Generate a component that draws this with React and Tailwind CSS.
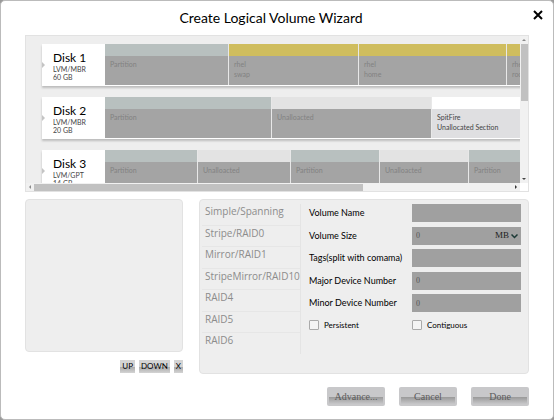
const disks = [
  {
    name: 'Disk 1', type: 'LVM/MBR', size: '60 GB',
    segments: [
      { kind: 'part', lines: ['Partition'], width: 'w-[123px]' },
      { kind: 'gold', lines: ['rhel', 'swap'], width: 'w-[129px]' },
      { kind: 'gold', lines: ['rhel', 'home'], width: 'w-[147px]' },
      { kind: 'gold', lines: ['rhel', 'root'], width: 'w-40' },
    ],
  },
  {
    name: 'Disk 2', type: 'LVM/MBR', size: '20 GB',
    segments: [
      { kind: 'part', lines: ['Partition'], width: 'w-[166px]' },
      { kind: 'free', lines: ['Unalloacted'], width: 'w-[159px]' },
      { kind: 'selected', lines: ['SpitFire', 'Unallocated Section'], width: 'w-40' },
    ],
  },
  {
    name: 'Disk 3', type: 'LVM/GPT', size: '14 GB',
    segments: [
      { kind: 'part', lines: ['Partition'], width: 'w-[92px]' },
      { kind: 'free', lines: ['Unalloacted'], width: 'w-[92px]' },
      { kind: 'part', lines: ['Partition'], width: 'w-[88px]' },
      { kind: 'free', lines: ['Unalloacted'], width: 'w-[88px]' },
      { kind: 'part', lines: ['Partition'], width: 'w-40' },
    ],
  },
];

const heads = { part: 'bg-[#b8c0bf]', gold: 'bg-[#cfbd5e]', free: 'bg-[#e3e3e3]', selected: 'bg-white' };

const volumeTypes = ['Simple/Spanning', 'Stripe/RAID0', 'Mirror/RAID1', 'StripeMirror/RAID10', 'RAID4', 'RAID5', 'RAID6'];

function Segment({ kind, lines, width }) {
  const body = kind === 'selected' ? 'bg-[#dfdfe1] text-[#444]' : 'bg-[#a4a4a4] text-[#828282]';
  return (
    <div className={`flex shrink-0 flex-col ${width}`}>
      <div className={`h-3 ${heads[kind]}`} />
      <div className={`flex-1 px-[5px] pt-[3px] text-[7px] leading-[10px] whitespace-nowrap ${body}`}>
        {lines.map((l) => <div key={l}>{l}</div>)}
      </div>
    </div>
  );
}

function Disk({ disk }) {
  return (
    <div className="flex h-[42px] w-max shrink-0 bg-white pb-px shadow-[0_2px_2px_#bdbdbd]">
      <div className="flex w-[63px] shrink-0 items-center">
        <svg className="h-2 w-1" viewBox="0 0 4 8"><path d="M0 1l3 3-3 3z" fill="#c4c4c4" /></svg>
        <div className="pt-[3px] pl-[7px] text-[7px] leading-2 text-[#444]">
          <div className="text-[12px] leading-[14px] text-black">{disk.name}</div>
          <div>{disk.type}</div>
          <div>{disk.size}</div>
        </div>
      </div>
      <div className="flex gap-px bg-[#e8e8e8]">
        {disk.segments.map((s, i) => <Segment key={i} {...s} />)}
      </div>
    </div>
  );
}

function Arrow({ d, fill }) {
  return <svg className="size-2 shrink-0" viewBox="0 0 8 8"><path d={d} fill={fill} /></svg>;
}

function DiskList() {
  return (
    <section className="grid h-[157px] grid-cols-[minmax(0,1fr)_8px] grid-rows-[minmax(0,1fr)_8px] border border-[#e2e2e2] bg-[#eee]">
      <div className="flex flex-col gap-[11px] overflow-hidden pt-2 pl-4">
        {disks.map((d) => <Disk key={d.name} disk={d} />)}
      </div>
      <div className="flex flex-col items-center bg-[#f1f1f1]">
        <Arrow d="M2 5l2-2 2 2z" fill="#8a8a8a" />
        <div className="h-[57px] w-[7px] bg-[#c1c1c1]" />
        <div className="mt-auto"><Arrow d="M2 3l2 2 2-2z" fill="#444" /></div>
      </div>
      <div className="flex items-center bg-[#f1f1f1]">
        <Arrow d="M5 2l-2 2 2 2z" fill="#8a8a8a" />
        <div className="h-[7px] w-2/3 bg-[#c1c1c1]" />
        <div className="ml-auto"><Arrow d="M3 2l2 2-2 2z" fill="#333" /></div>
      </div>
      <div className="bg-white" />
    </section>
  );
}

const box = 'block h-[18px] w-full min-w-0 rounded-none bg-[#a0a0a0] px-1 font-["Liberation_Serif",serif] text-[8px] text-[#222] placeholder:text-[#555] outline-none';

function Field({ id, label, children }) {
  return (
    <div className="flex items-center">
      <label htmlFor={id} className="w-[103px] shrink-0 text-[9px] leading-[18px] whitespace-nowrap">{label}</label>
      <div className="min-w-0 flex-1">{children}</div>
    </div>
  );
}

function Check({ id, label }) {
  return (
    <div className="flex items-center gap-[5px]">
      <input id={id} type="checkbox" className="size-[10px] appearance-none rounded-[1px] border border-[#aaa] bg-[#f4f4f4] checked:bg-[#888]" />
      <label htmlFor={id} className="text-[8px] leading-[10px]">{label}</label>
    </div>
  );
}

function SmallButton({ children }) {
  return (
    <button type="button" className="h-[13px] bg-linear-to-b from-[#d4d4d4] from-50% via-[#ababab] via-55% to-[#d4d4d4] px-[2px] text-[8px] leading-[13px]">
      {children}
    </button>
  );
}

function WizardButton({ children }) {
  return (
    <button type="button" className="relative h-[19px] w-[58px] rounded-[2px] bg-[#c8c8ca] font-['Liberation_Serif',serif] text-[10px] leading-[19px] text-[#5c5c5c]">
      <span className="absolute inset-x-[2px] top-[10px] bottom-0 bg-linear-to-b from-[#999] to-[#c8c8ca] to-80%" />
      <span className="relative">{children}</span>
    </button>
  );
}

export default function App() {
  return (
    <div className="bg-[#999] font-[Lato,sans-serif] text-black">
      <main className="flex min-h-screen flex-col rounded-[5px] border border-[#bbb] bg-white px-6 pb-[13px]">
        <header className="relative flex h-[34px] items-center justify-center pr-3">
          <h1 className="text-[14px] leading-5">Create Logical Volume Wizard</h1>
          <button type="button" aria-label="Close" className="absolute top-[9px] -right-[14px]">
            <svg className="size-[10px]" viewBox="0 0 10 10"><path d="M1 1l8 8M9 1L1 9" stroke="#000" strokeWidth="2" /></svg>
          </button>
        </header>
        <DiskList />
        <div className="mt-[7px] flex items-start gap-4">
          <div className="flex w-[158px] shrink-0 flex-col gap-2">
            <div className="h-[153px] rounded-[4px] border border-[#e2e2e2] bg-[#eee]" />
            <div className="flex justify-end gap-1">
              <SmallButton>UP</SmallButton>
              <SmallButton>DOWN</SmallButton>
              <SmallButton>X</SmallButton>
            </div>
          </div>
          <section className="flex h-[175px] min-w-0 flex-1 items-start rounded-[4px] border border-[#e2e2e2] bg-[#eee] pt-1 pr-[7px] pl-[2px]">
            <ul className="flex h-[150px] w-[99px] shrink-0 flex-col border-r border-[#e4e4e4] font-['Open_Sans',sans-serif] text-[10px] text-[#8c8c8c]">
              {volumeTypes.map((t) => (
                <li key={t} className="flex-1 border-b border-[#e6e6e6] pl-[3px] leading-[14px] whitespace-nowrap last:border-0">{t}</li>
              ))}
            </ul>
            <form className="min-w-0 flex-1 pl-2">
              <div className="flex h-[108px] flex-col justify-between">
                <Field id="name" label="Volume Name"><input id="name" className={box} /></Field>
                <Field id="size" label="Volume Size">
                  <div className="flex bg-[#a0a0a0]">
                    <input id="size" placeholder="0" className={box} />
                    <div className="relative shrink-0">
                      <select aria-label="Size unit" className="block h-[18px] w-[26px] appearance-none bg-transparent font-['Liberation_Serif',serif] text-[9px] text-[#222]">
                        <option>MB</option>
                        <option>GB</option>
                      </select>
                      <svg className="pointer-events-none absolute top-[7px] right-[3px] h-[5px] w-[7px]" viewBox="0 0 7 5"><path d="M0.500 0.500l3 3 3-3" fill="none" stroke="#1c3a36" strokeWidth="1.500" /></svg>
                    </div>
                  </div>
                </Field>
                <Field id="tags" label="Tags(split with comama)"><input id="tags" className={box} /></Field>
                <Field id="major" label="Major Device Number"><input id="major" placeholder="0" className={box} /></Field>
                <Field id="minor" label="Minor Device Number"><input id="minor" placeholder="0" className={box} /></Field>
              </div>
              <div className="grid grid-cols-[103px_1fr] pt-2">
                <Check id="persistent" label="Persistent" />
                <Check id="contiguous" label="Contiguous" />
              </div>
            </form>
          </section>
        </div>
        <footer className="mt-auto flex justify-end gap-[14px]">
          <WizardButton>Advance...</WizardButton>
          <WizardButton>Cancel</WizardButton>
          <WizardButton>Done</WizardButton>
        </footer>
      </main>
    </div>
  );
}
